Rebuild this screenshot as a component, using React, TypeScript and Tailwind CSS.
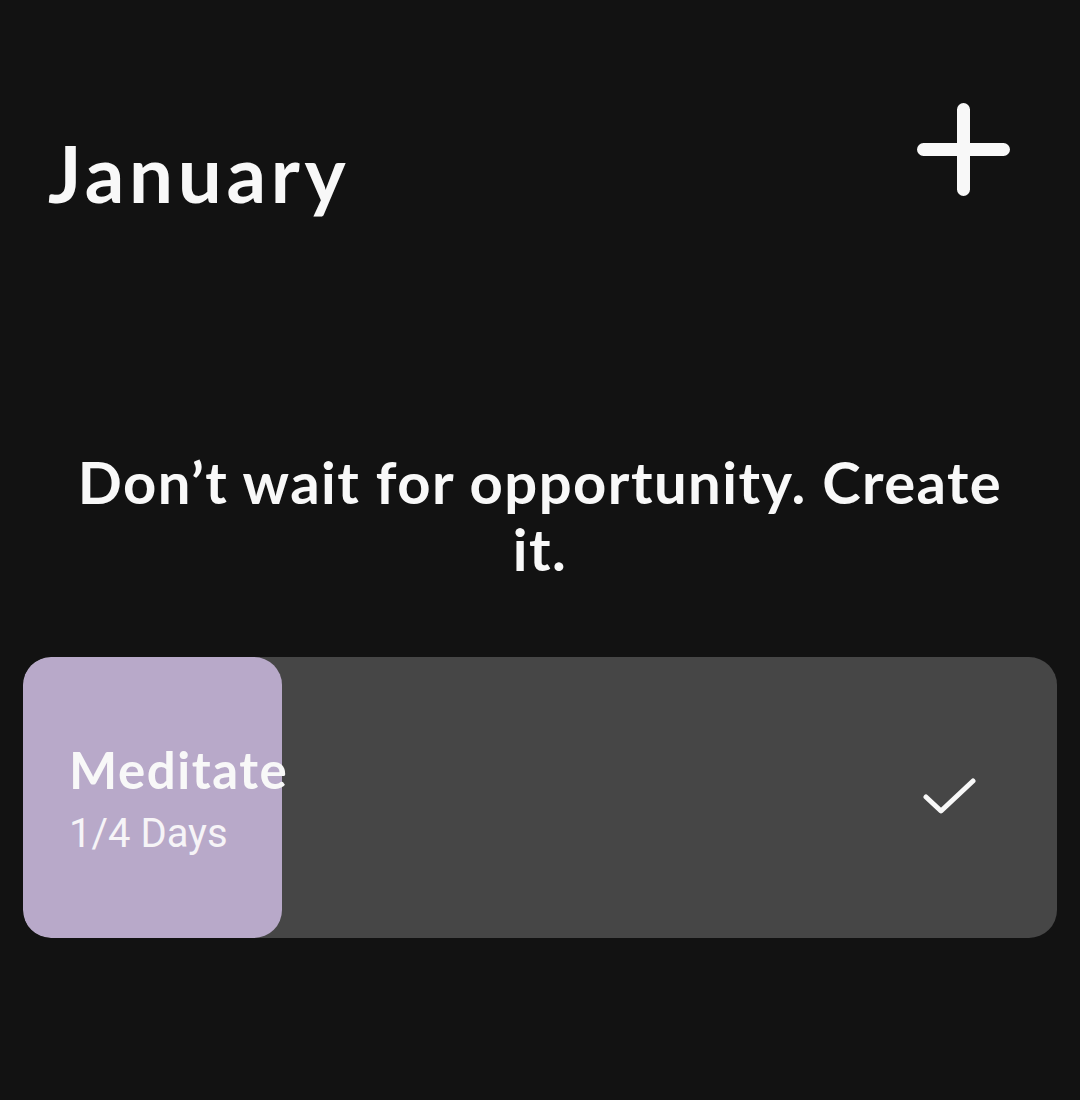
import React from 'react'

const heading = "font-['Lato','Noto_Sans',sans-serif]"

export default function App() {
  const done = 1
  const goal = 4

  return (
    <div className="min-h-[1100px] w-full bg-[#121212] text-[#f8f8f8]">
      {/* Header */}
      <div className="flex items-start justify-between pl-[48px] pr-[70px] pt-[103px]">
        <h1 className={`${heading} mt-[31px] text-[78px] leading-none font-bold tracking-[0.06em]`}>January</h1>
        <button className="flex h-[93px] w-[93px] items-center justify-center">
          <svg width="93" height="93" viewBox="0 0 93 93" fill="none" stroke="#f8f8f8" strokeWidth="13" strokeLinecap="round">
            <path d="M46.5 6.5v80M6.5 46.5h80" />
          </svg>
        </button>
      </div>

      {/* Quote */}
      <p className={`${heading} mt-[236px] px-[60px] text-center text-[58px] leading-[67px] font-bold tracking-[0.025em]`}>
        Don’t wait for opportunity. Create it.
      </p>

      {/* Habit card */}
      <div className="mx-[23px] mt-[75px] relative h-[281px] overflow-hidden rounded-[28px] bg-[#464646]">
        <div
          className="absolute inset-y-0 left-0 rounded-[28px] bg-[#b8a9c9]"
          style={{ width: `${(done / goal) * 100}%` }}
        />
        <div className="relative flex h-full items-center justify-between pl-[46px] pr-[80px] pt-[4px]">
          <div className="flex flex-col">
            <span className={`${heading} text-[51px] leading-[56px] font-bold tracking-[0.03em]`}>Meditate</span>
            <span className="mt-[12px] font-['Roboto',sans-serif] text-[40px] leading-[48px] font-normal text-[#f6f4f7]">
              {done}/{goal} Days
            </span>
          </div>
          <svg className="-mt-[4px]" width="54" height="40" viewBox="0 0 54 40" fill="none" stroke="#f8f8f8" strokeWidth="5" strokeLinecap="round" strokeLinejoin="round">
            <path d="M3 19l15 14L50 3" />
          </svg>
        </div>
      </div>
    </div>
  )
}
